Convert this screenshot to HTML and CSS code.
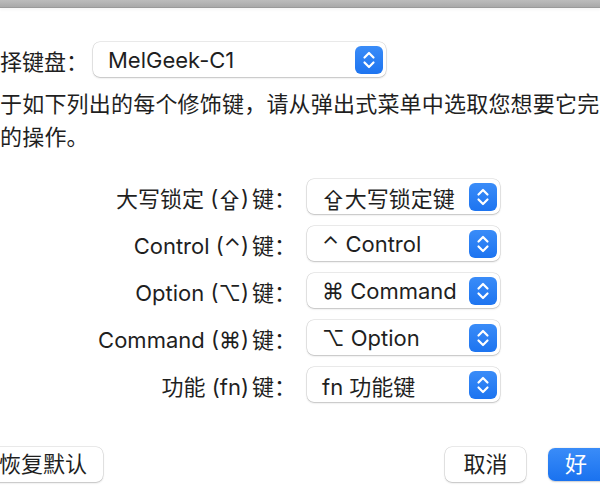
FILE: index.html
```html
<!DOCTYPE html>
<html lang="zh-CN">
<head>
<meta charset="utf-8">
<title>修饰键</title>
<link rel="stylesheet" href="styles.css">
</head>
<body>
<div class="titlebar"></div>
<div class="content">
  <div class="kbd-row">
    <span class="kbd-label">择键盘：</span>
    <div class="popup popup-wide">
      <span class="popup-text">MelGeek-C1</span>
      <span class="stepper"><svg viewBox="0 0 28 28" width="28" height="28"><path d="M9.5 11.5 L14 7 L18.5 11.5 M9.5 16.5 L14 21 L18.5 16.5" fill="none" stroke="#fff" stroke-width="2.2" stroke-linecap="round" stroke-linejoin="round"/></svg></span>
    </div>
  </div>
  <p class="desc">于如下列出的每个修饰键，请从弹出式菜单中选取您想要它完成<br>的操作。</p>
  <div class="keys">
    <span class="key-label">大写锁定 (⇪)<span class="thin"></span>键：</span>
    <div class="popup"><span class="popup-text">⇪大写锁定键</span><span class="stepper"><svg viewBox="0 0 28 28" width="28" height="28"><path d="M9.5 11.5 L14 7 L18.5 11.5 M9.5 16.5 L14 21 L18.5 16.5" fill="none" stroke="#fff" stroke-width="2.2" stroke-linecap="round" stroke-linejoin="round"/></svg></span></div>
    <span class="key-label">Control (⌃)<span class="thin"></span>键：</span>
    <div class="popup"><span class="popup-text">⌃ Control</span><span class="stepper"><svg viewBox="0 0 28 28" width="28" height="28"><path d="M9.5 11.5 L14 7 L18.5 11.5 M9.5 16.5 L14 21 L18.5 16.5" fill="none" stroke="#fff" stroke-width="2.2" stroke-linecap="round" stroke-linejoin="round"/></svg></span></div>
    <span class="key-label">Option (⌥)<span class="thin"></span>键：</span>
    <div class="popup"><span class="popup-text">⌘ Command</span><span class="stepper"><svg viewBox="0 0 28 28" width="28" height="28"><path d="M9.5 11.5 L14 7 L18.5 11.5 M9.5 16.5 L14 21 L18.5 16.5" fill="none" stroke="#fff" stroke-width="2.2" stroke-linecap="round" stroke-linejoin="round"/></svg></span></div>
    <span class="key-label">Command (⌘)<span class="thin"></span>键：</span>
    <div class="popup"><span class="popup-text">⌥ Option</span><span class="stepper"><svg viewBox="0 0 28 28" width="28" height="28"><path d="M9.5 11.5 L14 7 L18.5 11.5 M9.5 16.5 L14 21 L18.5 16.5" fill="none" stroke="#fff" stroke-width="2.2" stroke-linecap="round" stroke-linejoin="round"/></svg></span></div>
    <span class="key-label">功能 (fn)<span class="thin"></span>键：</span>
    <div class="popup"><span class="popup-text">fn 功能键</span><span class="stepper"><svg viewBox="0 0 28 28" width="28" height="28"><path d="M9.5 11.5 L14 7 L18.5 11.5 M9.5 16.5 L14 21 L18.5 16.5" fill="none" stroke="#fff" stroke-width="2.2" stroke-linecap="round" stroke-linejoin="round"/></svg></span></div>
  </div>
  <div class="footer">
    <button class="btn btn-restore">恢复默认</button>
    <div class="footer-right">
      <button class="btn btn-cancel">取消</button>
      <button class="btn btn-ok">好</button>
    </div>
  </div>
</div>
</body>
</html>
```
FILE: styles.css
```css
* { box-sizing: border-box; }
html, body {
  margin: 0;
  padding: 0;
  width: 600px;
  height: 500px;
  overflow: hidden;
  background: #ffffff;
}
body {
  font-family: "Inter", "Noto Sans CJK SC", "DejaVu Sans", sans-serif;
  font-size: 22px;
  color: #1f1f1f;
}
.titlebar {
  height: 8px;
  background: linear-gradient(#bcbcbc, #a9a9a9);
  border-bottom: 1px solid #9a9a9a;
  box-shadow: 0 2px 3px rgba(0,0,0,0.04);
}
.content {
  display: flex;
  flex-direction: column;
}
.kbd-row {
  display: flex;
  align-items: center;
  margin-top: 34px;
}
.kbd-label {
  width: 93px;
  white-space: nowrap;
}
.popup {
  display: flex;
  align-items: center;
  justify-content: space-between;
  height: 35px;
  width: 193px;
  padding: 0 3px 0 15px;
  background: #fff;
  border-radius: 7px;
  box-shadow: 0 0 0 0.5px rgba(0,0,0,0.16), 0 1px 2px rgba(0,0,0,0.18);
  white-space: nowrap;
}
.popup-wide { width: 293px; }
.stepper {
  display: flex;
  width: 28px;
  height: 28px;
  border-radius: 6px;
  background: linear-gradient(#3a8cf8, #1d74f0);
}
.desc {
  margin: 11px 0 0 0;
  line-height: 33px;
  white-space: nowrap;
  letter-spacing: 0.2px;
}
.keys {
  display: grid;
  grid-template-columns: 287px 193px;
  column-gap: 20px;
  row-gap: 12px;
  align-items: center;
  margin-top: 25px;
}
.key-label {
  justify-self: end;
  white-space: nowrap;
  margin-right: -9px;
}
.thin {
  display: inline-block;
  width: 3px;
}
.footer {
  display: flex;
  justify-content: space-between;
  align-items: center;
  margin-top: 45px;
}
.footer-right {
  display: flex;
  align-items: center;
  gap: 22px;
  margin-right: -28px;
}
.btn {
  font: inherit;
  color: #1f1f1f;
  height: 35px;
  border: none;
  border-radius: 7px;
  background: #fff;
  box-shadow: 0 0 0 0.5px rgba(0,0,0,0.16), 0 1px 2px rgba(0,0,0,0.18);
  padding: 0 17px;
  line-height: 35px;
  white-space: nowrap;
}
.btn-restore {
  margin-left: -20px;
  padding-left: 19px;
  padding-right: 16px;
}
.btn-cancel { width: 81px; }
.btn-ok {
  width: 80px;
  height: 33px;
  line-height: 33px;
  text-align: left;
  color: #fff;
  background: linear-gradient(#3a8cf8, #1a72ef);
  box-shadow: 0 0.5px 1.5px rgba(0,0,0,0.2);
}
```
